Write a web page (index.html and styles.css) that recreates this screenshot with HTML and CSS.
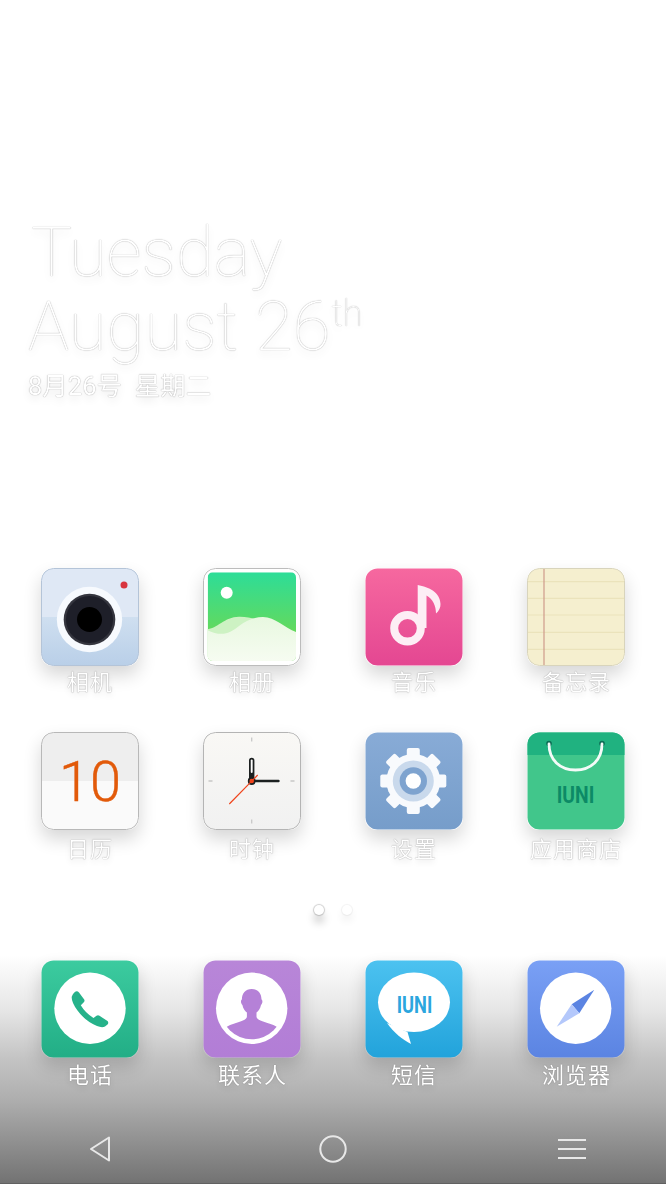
FILE: index.html
```html
<!DOCTYPE html>
<html lang="en">
<head>
  <meta charset="UTF-8">
  <meta name="viewport" content="width=device-width, initial-scale=1.0">
  <title>Home screen</title>
  <link rel="stylesheet" href="styles.css">
</head>
<body>
  <div class="date">
    <div class="date-line date-first">Tuesday</div>
    <div class="date-line">August 26<span class="date-th">th</span></div>
    <div class="date-cn">8月26号&nbsp;&nbsp;星期二</div>
  </div>

  <div class="apps">
    <div class="app">
      <svg class="icon" viewBox="0 0 98 98">
        <defs><linearGradient id="camBottom" x1="0" y1="0" x2="0" y2="1"><stop offset="0" stop-color="#cfdff0"/><stop offset="1" stop-color="#b9cfe8"/></linearGradient></defs>
        <rect x="0.5" y="0.5" width="97" height="97" rx="12" fill="#dfe8f5"/>
        <path d="M0.5 49H97.5V85.5a12 12 0 0 1-12 12H12.5a12 12 0 0 1-12-12Z" fill="url(#camBottom)"/>
        <rect x="0.5" y="0.5" width="97" height="97" rx="12" fill="none" stroke="#b4c4d8"/>
        <circle cx="83" cy="17" r="3.5" fill="#d8343f"/>
        <circle cx="48.5" cy="51.5" r="32.7" fill="#f7fafe"/>
        <circle cx="48.5" cy="51.5" r="25.8" fill="#34353e"/>
        <circle cx="48.5" cy="51.5" r="23.5" fill="#1e1f29"/>
        <circle cx="48.5" cy="51.5" r="12.5" fill="#000"/>
      </svg>
      <div class="label">相机</div>
    </div>
    <div class="app">
      <svg class="icon" viewBox="0 0 98 98">
        <defs>
          <linearGradient id="albumSky" x1="0" y1="0" x2="0" y2="1"><stop offset="0" stop-color="#2ddd98"/><stop offset="0.7" stop-color="#66d95a"/></linearGradient>
          <linearGradient id="albumFloor" x1="0" y1="0" x2="0" y2="1"><stop offset="0" stop-color="#e8f8e0"/><stop offset="1" stop-color="#f6fcf1"/></linearGradient>
          <clipPath id="albumClip"><rect x="4.7" y="4.3" width="88.3" height="88.7" rx="5"/></clipPath>
        </defs>
        <rect x="0.5" y="0.5" width="97" height="97" rx="12" fill="#fff" stroke="#bcbcbc"/>
        <g clip-path="url(#albumClip)">
          <rect x="4.7" y="4.3" width="88.3" height="88.7" fill="url(#albumSky)"/>
          <path d="M4 61C14 61 22 48 37 48.700C50 49.500 60 52 70 58L93 70V93H4Z" fill="#cdf2c3"/>
          <path d="M4 62C20 70 28 64 36 58C44 52 52 49 60 49C72 49 82 60 93 64V93H4Z" fill="url(#albumFloor)"/>
        </g>
        <circle cx="23.7" cy="24.700" r="6" fill="#fff"/>
      </svg>
      <div class="label">相册</div>
    </div>
    <div class="app">
      <svg class="icon" viewBox="0 0 98 98">
        <defs><linearGradient id="musicBg" x1="0" y1="0" x2="0" y2="1"><stop offset="0" stop-color="#f6689f"/><stop offset="1" stop-color="#e44792"/></linearGradient></defs>
        <rect x="0.5" y="0.5" width="97" height="97" rx="12" fill="url(#musicBg)"/>
        <path d="M52.700 17C64 19 75 24 75.500 36C75.700 39 74 43 71 45.500C71 38 68 31 61.500 27.500V60H52.700Z" fill="#fdeef5"/>
        <circle cx="42.500" cy="60.300" r="13.300" fill="none" stroke="#fdeef5" stroke-width="8"/>
      </svg>
      <div class="label">音乐</div>
    </div>
    <div class="app">
      <svg class="icon" viewBox="0 0 98 98">
        <rect x="0.5" y="0.5" width="97" height="97" rx="12" fill="#f5efcf" stroke="#d8d4bc"/>
        <path d="M1 13.700H97M1 30.300H97M1 47H97M1 64.300H97M1 81.300H97" stroke="#ebe3bb" stroke-width="1.200"/>
        <path d="M17 1V97" stroke="#cf9a8a" stroke-width="1.200"/>
      </svg>
      <div class="label">备忘录</div>
    </div>

    <div class="app app-second">
      <svg class="icon" viewBox="0 0 98 98">
        <rect x="0.5" y="0.5" width="97" height="97" rx="12" fill="#fafafa"/>
        <path d="M0.5 49V12.500a12 12 0 0 1 12-12H85.500a12 12 0 0 1 12 12V49Z" fill="#eeeeee"/>
        <rect x="0.5" y="0.5" width="97" height="97" rx="12" fill="none" stroke="#b8b8b8"/>
        <text class="cal-day" x="49" y="68.500" text-anchor="middle">10</text>
      </svg>
      <div class="label">日历</div>
    </div>
    <div class="app app-second">
      <svg class="icon" viewBox="0 0 98 98">
        <defs><linearGradient id="clockBg" x1="0" y1="0" x2="0" y2="1"><stop offset="0" stop-color="#f9f8f5"/><stop offset="1" stop-color="#f1f1f1"/></linearGradient></defs>
        <rect x="0.5" y="0.5" width="97" height="97" rx="12" fill="url(#clockBg)" stroke="#b4b4b4"/>
        <path d="M48.700 5.500V9.500M48.700 87.500V91.500M5.500 49H9.500M87.500 49H91.500" stroke="#c8c8c8" stroke-width="1.300"/>
        <path d="M48.700 49V28.500" stroke="#1c2020" stroke-width="5.400" stroke-linecap="round"/>
        <path d="M48.700 40V28.500" stroke="#fff" stroke-width="1.900" stroke-linecap="round"/>
        <path d="M48.700 49H75.500" stroke="#1c2020" stroke-width="2.400" stroke-linecap="round"/>
        <circle cx="48.700" cy="49" r="3.900" fill="#1c2020"/>
        <path d="M26.300 72L54.700 43" stroke="#f0431a" stroke-width="1.200"/>
        <circle cx="48.700" cy="49" r="2.300" fill="#f0431a"/>
      </svg>
      <div class="label">时钟</div>
    </div>
    <div class="app app-second">
      <svg class="icon" viewBox="0 0 98 98">
        <defs><linearGradient id="setBg" x1="0" y1="0" x2="0" y2="1"><stop offset="0" stop-color="#88abd6"/><stop offset="1" stop-color="#769dca"/></linearGradient></defs>
        <rect x="0.5" y="0.5" width="97" height="97" rx="12" fill="url(#setBg)"/>
        <g fill="#f8fafd">
          <circle cx="48.300" cy="49" r="27"/>
          <rect x="41.800" y="16" width="13" height="66" rx="2"/>
          <rect x="41.800" y="16" width="13" height="66" rx="2" transform="rotate(45 48.300 49)"/>
          <rect x="41.800" y="16" width="13" height="66" rx="2" transform="rotate(90 48.300 49)"/>
          <rect x="41.800" y="16" width="13" height="66" rx="2" transform="rotate(135 48.300 49)"/>
        </g>
        <circle cx="48.300" cy="49" r="20.500" fill="#c9d9ec"/>
        <circle cx="48.300" cy="49" r="13.700" fill="#7ea3cf"/>
        <circle cx="48.300" cy="49" r="7.700" fill="#fff"/>
      </svg>
      <div class="label">设置</div>
    </div>
    <div class="app app-second">
      <svg class="icon" viewBox="0 0 98 98">
        <rect x="0.5" y="0.5" width="97" height="97" rx="12" fill="#41c68b"/>
        <path d="M0.5 23V12.500a12 12 0 0 1 12-12H85.500a12 12 0 0 1 12 12V23Z" fill="#20b280"/>
        <circle cx="22" cy="11.500" r="2.800" fill="#0c6f56"/>
        <circle cx="75" cy="11.500" r="2.800" fill="#0c6f56"/>
        <path d="M22 12C22 28 33 38 48.500 38C64 38 75 28 75 12" fill="none" stroke="#f4fbf8" stroke-width="2.800" stroke-linecap="round"/>
        <text class="logo-text store-logo" x="29.700" y="71.300" textLength="37.600" lengthAdjust="spacingAndGlyphs">IUNI</text>
      </svg>
      <div class="label">应用商店</div>
    </div>
  </div>

  <div class="dots">
    <span class="dot"></span>
    <span class="dot dot-off"></span>
  </div>

  <div class="apps dock">
    <div class="app">
      <svg class="icon" viewBox="0 0 98 98">
        <defs><linearGradient id="phoneBg" x1="0" y1="0" x2="0" y2="1"><stop offset="0" stop-color="#3ccb9f"/><stop offset="1" stop-color="#22ae86"/></linearGradient></defs>
        <rect x="0.5" y="0.5" width="97" height="97" rx="12" fill="url(#phoneBg)"/>
        <circle cx="49" cy="48.300" r="35.700" fill="#fff"/>
        <path d="M33.600 32.200Q36 30 38 32.500L43.200 39.500Q44 41 42.800 42.200L39.800 45.200Q44 52.500 52.500 58L55.500 55.800Q57 54.800 58.500 55.800L66.500 61Q68 62.500 66.500 64.500L64 66.500Q61 68 56 66Q44 61 36.500 50.500Q30 41.500 30.800 36.500Q31 34.500 33.600 32.200Z" fill="#26b28a"/>
      </svg>
      <div class="label">电话</div>
    </div>
    <div class="app">
      <svg class="icon" viewBox="0 0 98 98">
        <defs>
          <linearGradient id="peopleBg" x1="0" y1="0" x2="0" y2="1"><stop offset="0" stop-color="#b886d8"/><stop offset="1" stop-color="#b27dd6"/></linearGradient>
          <clipPath id="peopleClip"><circle cx="48.700" cy="48.300" r="31"/></clipPath>
        </defs>
        <rect x="0.5" y="0.5" width="97" height="97" rx="12" fill="url(#peopleBg)"/>
        <circle cx="48.700" cy="48.300" r="35.700" fill="#fff"/>
        <g clip-path="url(#peopleClip)" fill="#b581d7">
          <path d="M48.700 29C55 29 58.500 33.500 58.500 39.500C59.800 40 59.800 43.500 58 45C57.300 48.500 55.500 51 53.500 52.500V56.500C53.500 60 60 61.500 66 63.500C69 64.500 72 65.500 74 67L74 82H23L23.500 67C25.500 65.500 28.500 64.500 31.500 63.500C37.500 61.500 43.900 60 43.900 56.500V52.500C41.900 51 40.100 48.500 39.400 45C37.600 43.500 37.600 40 38.900 39.500C38.900 33.500 42.400 29 48.700 29Z"/>
        </g>
      </svg>
      <div class="label">联系人</div>
    </div>
    <div class="app">
      <svg class="icon" viewBox="0 0 98 98">
        <defs><linearGradient id="smsBg" x1="0" y1="0" x2="0" y2="1"><stop offset="0" stop-color="#4cc2f0"/><stop offset="1" stop-color="#22a3db"/></linearGradient></defs>
        <rect x="0.5" y="0.5" width="97" height="97" rx="12" fill="url(#smsBg)"/>
        <ellipse cx="49" cy="42.300" rx="36" ry="29.800" fill="#fff"/>
        <path d="M22 63C28 72 38 80 46 84L42.500 72Z" fill="#fff"/>
        <text class="logo-text sms-logo" x="31.700" y="52.700" textLength="35.600" lengthAdjust="spacingAndGlyphs">IUNI</text>
      </svg>
      <div class="label">短信</div>
    </div>
    <div class="app">
      <svg class="icon" viewBox="0 0 98 98">
        <defs><linearGradient id="webBg" x1="0" y1="0" x2="0" y2="1"><stop offset="0" stop-color="#7aa0f5"/><stop offset="1" stop-color="#5b84e2"/></linearGradient></defs>
        <rect x="0.5" y="0.5" width="97" height="97" rx="12" fill="url(#webBg)"/>
        <circle cx="48.700" cy="48.300" r="35.700" fill="#fff"/>
        <path d="M67.300 29.700L44.700 44.300L52.300 53.300Z" fill="#5b84e2"/>
        <path d="M29.700 66.700L44.700 44.300L52.300 53.300Z" fill="#b4c8fb"/>
      </svg>
      <div class="label">浏览器</div>
    </div>
  </div>

  <div class="navbar">
    <svg class="nav-back" viewBox="0 0 20 26"><path d="M19 1.500V24.500L1 13Z" fill="none" stroke="#e8e8e8" stroke-width="2" stroke-linejoin="round"/></svg>
    <svg class="nav-home" viewBox="0 0 28 28"><circle cx="14" cy="14" r="12.700" fill="none" stroke="#e8e8e8" stroke-width="2"/></svg>
    <svg class="nav-menu" viewBox="0 0 28 20"><path d="M0 1H28M0 10H28M0 19H28" stroke="#e8e8e8" stroke-width="2"/></svg>
  </div>
</body>
</html>
```

FILE: styles.css
```css
body {
  margin: 0;
  width: 666px;
  height: 1184px;
  overflow: hidden;
  color: #fff;
  font-family: Roboto, "Noto Sans CJK SC", sans-serif;
  background: linear-gradient(#fff 955px, #e6e6e6 1010px, #c4c4c4 1058px, #aeaeae 1100px, #727272 1184px);
  box-shadow: inset 0 -1px 0 rgba(0, 0, 0, 0.15);
}
.date {
  padding: 216px 0 0 28px;
  height: 568px;
  box-sizing: border-box;
  will-change: transform;
}
.date-line {
  font-size: 69px;
  font-weight: 100;
  line-height: 74px;
  text-shadow: 0 0 1px rgba(0, 0, 0, 0.45), 0 4px 8px rgba(0, 0, 0, 0.08);
}
.date-first {
  padding-left: 3px;
}
.date-th {
  font-size: 36px;
  vertical-align: 24px;
  line-height: 0;
  margin-left: 1px;
}
.date-cn {
  font-size: 25.500px;
  line-height: 30px;
  margin-top: 7px;
  text-shadow: 0 0 1px rgba(0, 0, 0, 0.5), 0 4px 8px rgba(0, 0, 0, 0.1);
}
.apps {
  display: grid;
  grid-template-columns: repeat(4, 162px);
  padding: 0 9px;
}
.app {
  height: 164px;
  display: flex;
  flex-direction: column;
  align-items: center;
}
.icon {
  width: 98px;
  height: 98px;
  flex: none;
  border-radius: 12px;
  box-shadow: 0 9px 18px rgba(0, 0, 0, 0.16);
}
.label {
  font-family: "Noto Sans CJK SC", sans-serif;
  font-size: 22px;
  letter-spacing: 1px;
  line-height: 30px;
  margin: -1px 0 0 1px;
  text-shadow: 0 0 1px rgba(0, 0, 0, 0.5), 0 3px 6px rgba(0, 0, 0, 0.1);
  will-change: transform;
}
.app-second .label {
  margin-top: 2px;
}
.cal-day {
  font-family: Roboto, sans-serif;
  font-size: 56px;
  font-weight: 300;
  fill: #e25a0a;
  stroke: #e25a0a;
  stroke-width: 0.4px;
}
.logo-text {
  font-family: Roboto, sans-serif;
  font-weight: 700;
}
.store-logo {
  font-size: 24.700px;
  fill: #0c8a66;
}
.sms-logo {
  font-size: 24.700px;
  fill: #2ba6de;
}
.dots {
  display: flex;
  gap: 18px;
  height: 64px;
  padding: 9px 0 0 314px;
  box-sizing: border-box;
}
.dot {
  width: 10px;
  height: 10px;
  border-radius: 50%;
  background: #fff;
  box-shadow: 0 0 1px 1px rgba(0, 0, 0, 0.18), 0 8px 8px rgba(0, 0, 0, 0.22);
}
.dot-off {
  box-shadow: 0 0 1px 1px rgba(0, 0, 0, 0.05), 0 6px 8px rgba(0, 0, 0, 0.07);
}
.dock .app {
  height: 176px;
}
.dock .label {
  margin-top: 0;
}
.navbar {
  display: flex;
  justify-content: space-between;
  align-items: center;
  padding: 0 80px 0 90px;
  height: 26px;
}
.nav-back {
  width: 20px;
  height: 26px;
}
.nav-home {
  width: 28px;
  height: 28px;
  margin-right: 2px;
}
.nav-menu {
  width: 28px;
  height: 20px;
}
```
